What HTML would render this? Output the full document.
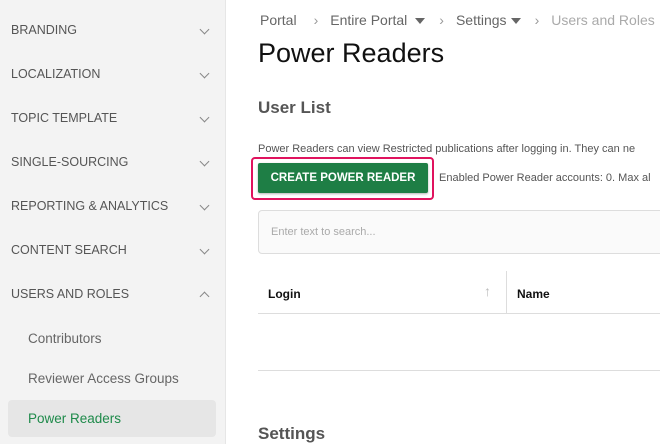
<!DOCTYPE html>
<html><head><style>
*{margin:0;padding:0;box-sizing:border-box}
body{width:660px;height:444px;overflow:hidden;background:#fff;font-family:"Liberation Sans",sans-serif;position:relative}
.sb{position:absolute;left:0;top:0;width:226px;height:444px;background:#f3f3f3;border-right:1px solid #e6e6e6}
.it{position:absolute;left:11px;font-size:12.5px;color:#555}
.ch{position:absolute;left:201px;width:7px;height:7px;border-right:1.2px solid #888;border-bottom:1.2px solid #888;transform:rotate(45deg)}
.up{transform:rotate(-135deg)}
.sub{position:absolute;left:28px;font-size:13.5px;color:#666}
.act{position:absolute;left:8px;top:400px;width:208px;height:37px;background:#e6e6e6;border-radius:4px}
.t{position:absolute;white-space:nowrap}
.tri{display:inline-block;width:0;height:0;border-left:5px solid transparent;border-right:5px solid transparent;border-top:6px solid #666;vertical-align:middle;margin-left:4px}
</style></head><body>
<div class="sb">
<div class="it" style="top:23px">BRANDING</div><div class="ch" style="top:26px"></div>
<div class="it" style="top:67px">LOCALIZATION</div><div class="ch" style="top:70px"></div>
<div class="it" style="top:111px">TOPIC TEMPLATE</div><div class="ch" style="top:114px"></div>
<div class="it" style="top:155px">SINGLE-SOURCING</div><div class="ch" style="top:158px"></div>
<div class="it" style="top:199px">REPORTING &amp; ANALYTICS</div><div class="ch" style="top:202px"></div>
<div class="it" style="top:243px">CONTENT SEARCH</div><div class="ch" style="top:246px"></div>
<div class="it" style="top:287px">USERS AND ROLES</div><div class="ch up" style="top:293px"></div>
<div class="sub" style="top:331px">Contributors</div>
<div class="sub" style="top:371px">Reviewer Access Groups</div>
<div class="act"></div>
<div class="sub" style="top:411px;color:#1e8a4a">Power Readers</div>
</div>
<div class="t" style="left:260px;top:12px;font-size:14px;color:#666">Portal<span style="margin:0 12px 0 17px;color:#999">›</span>Entire Portal<span class="tri" style="margin-left:8px"></span><span style="margin:0 12px 0 14px;color:#999">›</span>Settings<span class="tri"></span><span style="margin:0 12px 0 14px;color:#999">›</span><span style="color:#aaa">Users and Roles</span></div>
<div class="t" style="left:258px;top:38px;font-size:27px;color:#111">Power Readers</div>
<div class="t" style="left:258px;top:98px;font-size:17px;font-weight:bold;color:#555">User List</div>
<div class="t" style="left:258px;top:143px;font-size:11px;color:#555">Power Readers can view Restricted publications after logging in. They can ne</div>
<div style="position:absolute;left:251px;top:157px;width:183px;height:43px;border:2px solid #e0135e;border-radius:4px"></div>
<div style="position:absolute;left:258px;top:163px;width:170px;height:30px;background:#1e7e45;border-radius:2px;box-shadow:0 1px 2px rgba(0,0,0,.3);color:#fff;font-size:11.5px;font-weight:bold;text-align:center;line-height:30px">CREATE POWER READER</div>
<div class="t" style="left:439px;top:172px;font-size:11px;color:#555">Enabled Power Reader accounts: 0. Max al</div>
<div style="position:absolute;left:258px;top:210px;width:410px;height:44px;border:1px solid #ddd;border-radius:4px;background:#fafafa"></div>
<div class="t" style="left:271px;top:226px;font-size:11px;color:#aaa">Enter text to search...</div>
<div class="t" style="left:268px;top:287px;font-size:12px;font-weight:bold;color:#111">Login</div>
<div class="t" style="left:484px;top:283px;font-size:14px;color:#bbb">↑</div>
<div style="position:absolute;left:506px;top:271px;width:1px;height:42px;background:#ddd"></div>
<div class="t" style="left:517px;top:287px;font-size:12px;font-weight:bold;color:#111">Name</div>
<div style="position:absolute;left:258px;top:313px;width:402px;height:1px;background:#ddd"></div>
<div style="position:absolute;left:258px;top:370px;width:402px;height:1px;background:#ddd"></div>
<div class="t" style="left:258px;top:424px;font-size:17px;font-weight:bold;color:#555">Settings</div>
</body></html>
